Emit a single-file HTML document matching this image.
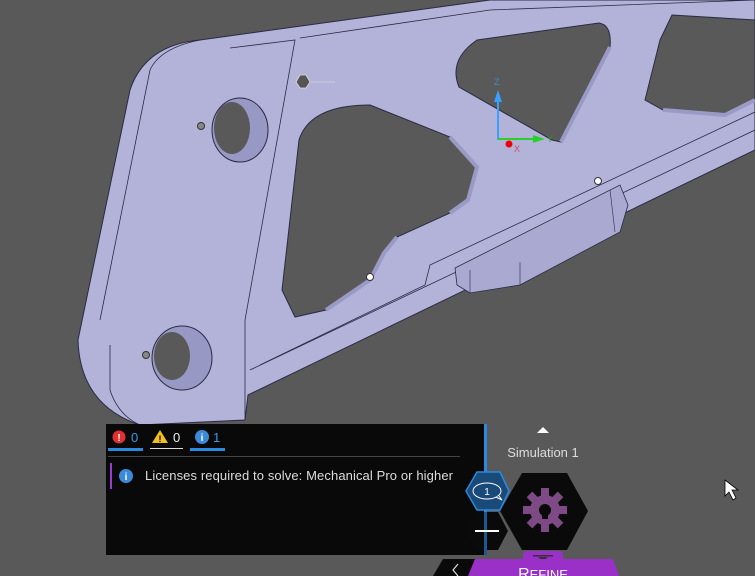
<!DOCTYPE html>
<html><head><meta charset="utf-8"><style>
html,body{margin:0;padding:0;width:755px;height:576px;overflow:hidden;background:#595959;font-family:"Liberation Sans",sans-serif}
svg{position:absolute;left:0;top:0}
.t{font-family:"Liberation Sans",sans-serif}
</style></head><body>
<svg width="755" height="576" viewBox="0 0 755 576">
<rect width="755" height="576" fill="#595959"/>
<!-- part -->
<path d="M200,40 L490,0 L755,0 L755,150 L248,395 L245,420 L140,425 Q80,405 78,340 L130,90 Q145,45 200,40 Z" fill="#b3b3d9" stroke="#2a2a44" stroke-width="1"/>
<path d="M200,40 Q160,48 150,70 L100,320" fill="none" stroke="#2a2a44" stroke-width="0.8"/>
<path d="M230,48 L295,40 L245,320 L245,420" fill="none" stroke="#2a2a44" stroke-width="0.8"/>
<path d="M110,345 L110,390 Q118,415 140,425" fill="none" stroke="#2a2a44" stroke-width="0.8"/>
<path d="M300,38 L490,10 L755,0" fill="none" stroke="#2a2a44" stroke-width="0.8"/>
<path d="M250,370 L755,130" fill="none" stroke="#2a2a44" stroke-width="0.8"/>
<path d="M260,365 L425,285 L430,265 L755,112" fill="none" stroke="#2a2a44" stroke-width="0.8"/>
<!-- rib -->
<path d="M455,268 L620,185 L628,205 L620,232 L520,285 L470,293 L457,285 Z" fill="#a9a9d2" stroke="#2a2a44" stroke-width="0.8"/>
<path d="M470,270 L470,293 M520,262 L520,285 M610,190 L615,232" stroke="#2a2a44" stroke-width="0.6"/>
<!-- holes -->
<path d="M370,105 L450,137 L477,167 L468,200 L450,213 L397,237 L384,253 L370,280 L326,310 L295,317 L282,290 L299,140 Q310,105 370,105 Z" fill="#595959" stroke="#2a2a44" stroke-width="1"/>
<path d="M450,137 L477,167 L468,200 L450,213 M397,237 L384,253 L370,280 L326,310" fill="none" stroke="#9a9ac6" stroke-width="4"/>
<path d="M477,40 L599,23 Q612,25 610,47 L561,142 L552,140 L459,87 Q448,60 477,40 Z" fill="#595959" stroke="#2a2a44" stroke-width="1"/>
<path d="M610,47 L561,142" stroke="#9a9ac6" stroke-width="4"/>
<path d="M672,15 L755,20 L755,100 L725,115 L663,110 L645,100 L660,40 Z" fill="#595959" stroke="#2a2a44" stroke-width="1"/>
<path d="M663,110 L725,115 L755,100" fill="none" stroke="#9a9ac6" stroke-width="4"/>
<ellipse cx="240" cy="130" rx="28" ry="32" fill="#9898c4" stroke="#2a2a44"/>
<ellipse cx="232" cy="128" rx="18" ry="26" fill="#595959"/>
<ellipse cx="182" cy="358" rx="30" ry="32" fill="#9898c4" stroke="#2a2a44"/>
<ellipse cx="172" cy="356" rx="18" ry="24" fill="#595959"/>
<circle cx="201" cy="126" r="3.5" fill="#888" stroke="#333"/>
<circle cx="146" cy="355" r="3.5" fill="#888" stroke="#333"/>
<circle cx="598" cy="181" r="3.5" fill="#fff" stroke="#333"/>
<circle cx="370" cy="277" r="3.5" fill="#fff" stroke="#333"/>
<polygon points="296,82 300,75 306,75 310,82 306,88 300,88" fill="#555" stroke="#ddd" stroke-width="0.8"/>
<line x1="310" y1="82" x2="335" y2="82" stroke="#ddd" stroke-width="0.5"/>
<!-- triad -->
<line x1="498" y1="140" x2="498" y2="100" stroke="#3aa0ff" stroke-width="2"/>
<polygon points="494,102 498,90 502,102" fill="#3aa0ff"/>
<text x="494" y="85" font-size="9" fill="#3a8ad0" class="t">Z</text>
<line x1="498" y1="139" x2="535" y2="139" stroke="#2ad02a" stroke-width="2"/>
<polygon points="533,135 545,139 533,143" fill="#2ad02a"/>
<text x="547" y="142" font-size="9" fill="#2a9a2a" class="t">Y</text>
<circle cx="509" cy="144" r="3.5" fill="#e00"/>
<text x="514" y="152" font-size="9" fill="#d05050" class="t">X</text>
<!-- panel -->
<rect x="106" y="424" width="379" height="131" fill="#090909"/>
<rect x="484" y="424" width="3" height="131" fill="#2a8ae0"/>
<circle cx="119" cy="437" r="6.5" fill="#e03030"/>
<text x="119" y="441" font-size="10" fill="#fff" text-anchor="middle" font-weight="bold" class="t">!</text>
<text x="131" y="442" font-size="13" fill="#3a9ae8" class="t">0</text>
<polygon points="160,430 168,443 152,443" fill="#f0c020"/>
<text x="160" y="442" font-size="9" fill="#000" text-anchor="middle" font-weight="bold" class="t">!</text>
<text x="173" y="442" font-size="13" fill="#eee" class="t">0</text>
<circle cx="202" cy="437" r="7" fill="#3a8ad8"/>
<text x="202" y="441" font-size="10" fill="#fff" text-anchor="middle" font-weight="bold" class="t">i</text>
<text x="213" y="442" font-size="13" fill="#3a9ae8" class="t">1</text>
<rect x="108" y="448" width="35" height="3" fill="#2a8ae0"/>
<rect x="150" y="448" width="33" height="1" fill="#ddd"/>
<rect x="190" y="448" width="35" height="3" fill="#2a8ae0"/>
<rect x="108" y="456" width="352" height="1" fill="#444"/>
<rect x="110" y="463" width="2" height="26" fill="#9a3ad0"/>
<circle cx="126" cy="476" r="7" fill="#3a8ad8"/>
<text x="126" y="480" font-size="10" fill="#fff" text-anchor="middle" font-weight="bold" class="t">i</text>
<text x="145" y="480" font-size="13" fill="#ddd" class="t" textLength="308">Licenses required to solve: Mechanical Pro or higher</text>
<!-- hexes -->
<polygon points="500,511 522,473 567,473 588,511 567,550 522,550" fill="#0a0a0a"/>
<polygon points="466,531 477,512 498,512 508,531 498,550 477,550" fill="#0a0a0a"/>
<rect x="484" y="512" width="3" height="43" fill="#1a5a90"/>
<rect x="475" y="530" width="24" height="2" fill="#fff"/>
<polygon points="466,491 477,472 500,472 509,491 500,510 477,510" fill="#1a4a7a" stroke="#2a8ae0" stroke-width="1.5"/>
<ellipse cx="487" cy="491" rx="14" ry="8" fill="none" stroke="#fff" stroke-width="1"/>
<path d="M496,497 L502,500 L499,496" fill="#1a4a7a" stroke="#fff" stroke-width="1"/>
<text x="487" y="495" font-size="10" fill="#fff" text-anchor="middle" class="t">1</text>
<g fill="#7d4a85" transform="translate(545,510)">
<circle r="15"/>
<g id="teeth"><rect x="-4" y="-22" width="8" height="9"/><rect x="-4" y="13" width="8" height="9"/><rect x="-22" y="-4" width="9" height="8"/><rect x="13" y="-4" width="9" height="8"/></g>
<use href="#teeth" transform="rotate(45)"/>
<circle r="6" fill="#0a0a0a"/>
<rect x="-3" y="0" width="6" height="9" fill="#0a0a0a"/>
</g>
<polygon points="537,433 543,427 549,433" fill="#fff"/>
<text x="543" y="457" font-size="13" fill="#ddd" text-anchor="middle" class="t">Simulation 1</text>
<!-- bottom -->
<path d="M523,560 L523,555 Q523,551 528,551 L558,551 Q563,551 563,555 L563,560 Z" fill="#9a30c8"/>
<rect x="533" y="555" width="20" height="1.5" fill="#333"/>
<polygon points="538,557 548,557 543,561" fill="#333"/>
<polygon points="433,576 443,559 475,559 470,576" fill="#0a0a0a"/>
<path d="M458,564 L453,570 L458,576" fill="none" stroke="#ddd" stroke-width="1.2"/>
<polygon points="468,576 475,559 613,559 619,576" fill="#9a30c8"/>
<text x="543" y="579" font-size="16" fill="#fff" text-anchor="middle" class="t">R<tspan font-size="13">EFINE</tspan></text>
<!-- cursor -->
<path d="M725,480 L725,496 L729,492 L733,500 L736,498 L732,490 L738,490 Z" fill="#fff" stroke="#000" stroke-width="0.8"/>
</svg>
</body></html>
